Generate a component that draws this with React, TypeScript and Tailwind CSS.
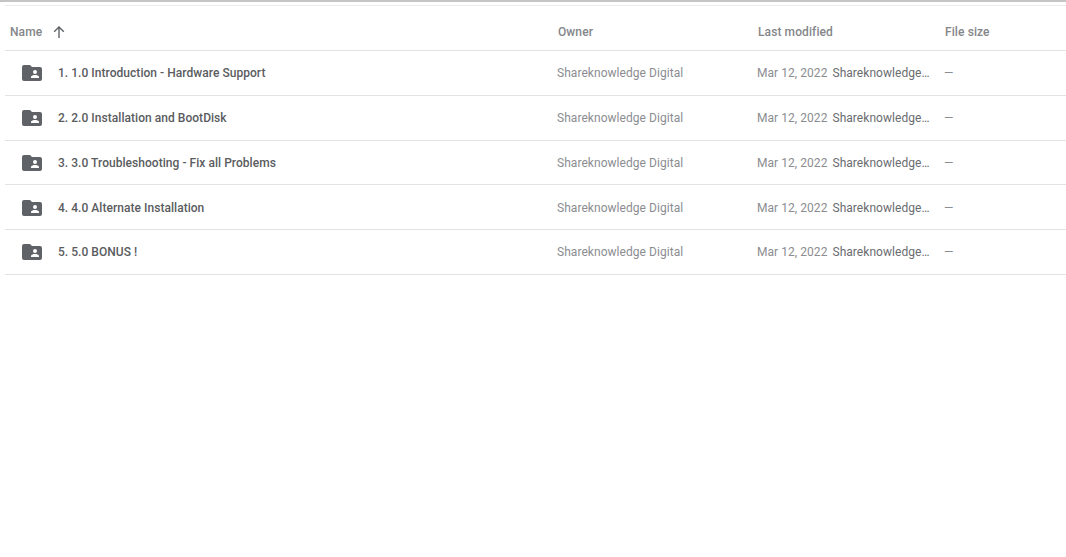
const rows = [
  "1. 1.0 Introduction - Hardware Support",
  "2. 2.0 Installation and BootDisk",
  "3. 3.0 Troubleshooting - Fix all Problems",
  "4. 4.0 Alternate Installation",
  "5. 5.0 BONUS !",
];

function SharedFolder() {
  return (
    <svg width="20" height="16" viewBox="0 0 20 16" className="shrink-0">
      <path
        fill="#5f6368"
        fillRule="evenodd"
        d="M2 0h6l2 2h8a2 2 0 0 1 2 2v10a2 2 0 0 1-2 2H2a2 2 0 0 1-2-2V2a2 2 0 0 1 2-2ZM13 5a2 2 0 1 0 0 4 2 2 0 0 0 0-4ZM9 12v1h8v-1c0-1.4-2.6-2-4-2s-4 .6-4 2Z"
      />
    </svg>
  );
}

function Arrow() {
  return (
    <svg width="12" height="12" viewBox="0 0 12 12" fill="none" stroke="#5f6368" strokeWidth="1.4">
      <path d="M6 12V1M1.2 5.8 6 1l4.8 4.8" />
    </svg>
  );
}

export default function App() {
  return (
    <div className="h-[557px] w-[1066px] overflow-hidden bg-white font-['Roboto',sans-serif]">
      <div className="h-[2px] bg-[#c4c5c7]" />
      <div className="ml-[5px] mt-[3px] h-px bg-[#ebebeb]" />
      <div className="ml-[5px]">
        <div className="flex h-[45px] items-center border-b border-[#e3e3e3] pt-[7px] text-[12px] font-medium tracking-[0.1px] text-[#84868a]">
          <div className="flex w-[553px] items-center pl-[5px]">
            <span>Name</span>
            <span className="ml-[11px] flex"><Arrow /></span>
          </div>
          <div className="w-[200px]">Owner</div>
          <div className="w-[187px]">Last modified</div>
          <div>File size</div>
        </div>
        {rows.map((name) => (
          <div key={name} className="flex h-[44.75px] items-center border-b border-[#e3e3e3] pt-px text-[12px] tracking-[0.05px]">
            <div className="flex w-[552px] items-center pl-[17px]">
              <SharedFolder />
              <span className="ml-[16px] font-medium tracking-[0.04px] text-[#5a5c60]">{name}</span>
            </div>
            <div className="w-[200px] text-[#8b8d91]">Shareknowledge Digital</div>
            <div className="flex w-[187px] items-center">
              <span className="shrink-0 text-[#8b8d91]">Mar 12, 2022</span>
              <span className="ml-[5px] w-[98px] truncate text-[#6a6c70]">Shareknowledge Digital</span>
            </div>
            <div className="text-[#8b8d91]">—</div>
          </div>
        ))}
      </div>
    </div>
  );
}
